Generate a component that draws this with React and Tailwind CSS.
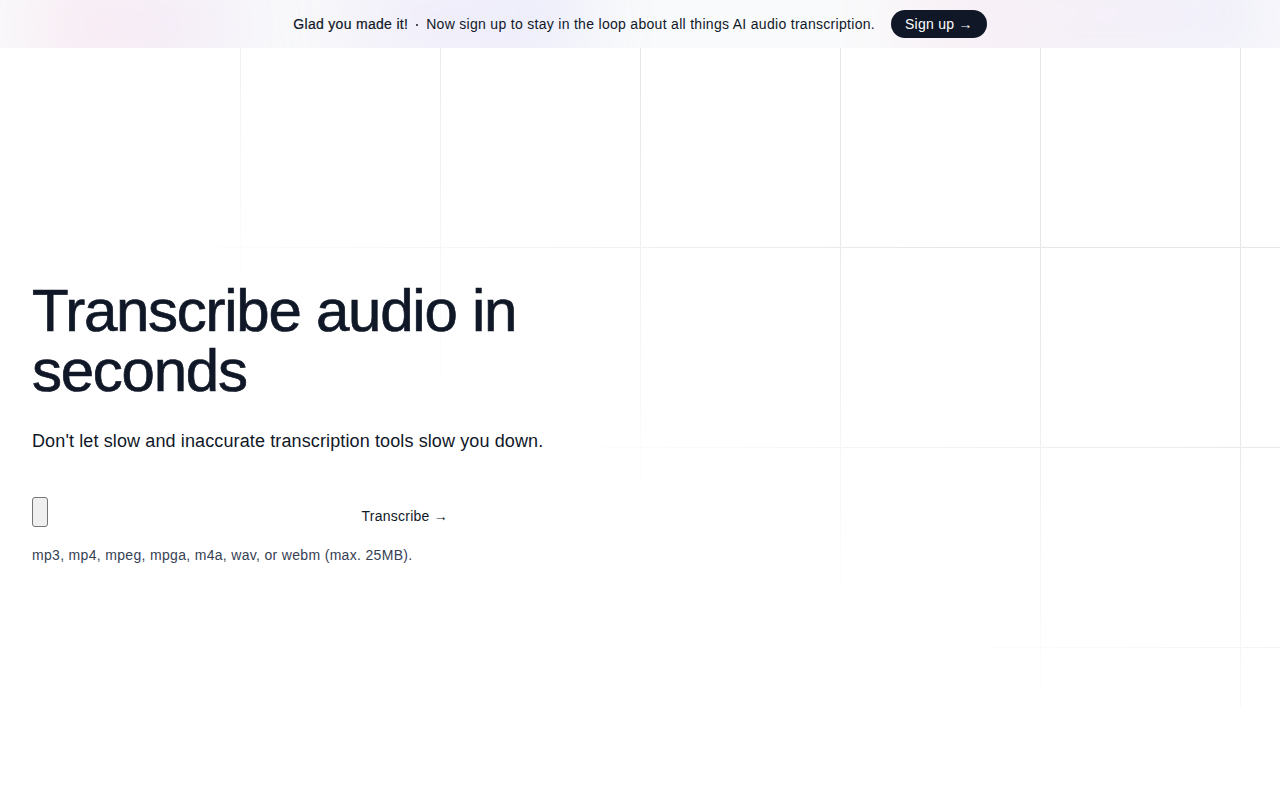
import React from "react";

const GridPattern = () => (
  <svg
    aria-hidden="true"
    className="absolute inset-x-0 top-0 -z-10 h-[660px] w-full stroke-gray-200 [mask-image:linear-gradient(to_top_right,transparent_40%,white_72%),linear-gradient(to_right,transparent_5%,white_18%)] [mask-composite:intersect]"
  >
    <defs>
      <pattern id="grid" width="200" height="200" x="50%" y="-1" patternUnits="userSpaceOnUse">
        <path d="M.5 200V.5H200" fill="none" />
      </pattern>
    </defs>
    <rect width="100%" height="100%" strokeWidth="0" fill="url(#grid)" />
  </svg>
);

const Banner = () => (
  <div className="relative isolate flex h-12 items-center justify-center gap-x-4 overflow-hidden bg-gray-50 px-6">
    <div className="absolute left-[30px] top-[-30px] -z-10 h-[110px] w-[220px] rounded-full bg-gradient-to-r from-[#ff80b5] to-[#c7a6f5] opacity-15 blur-2xl" />
    <div className="absolute left-[330px] top-[-40px] -z-10 h-[110px] w-[260px] rounded-full bg-gradient-to-r from-[#d9b6f0] to-[#9089fc] opacity-15 blur-2xl" />
    <div className="absolute left-[900px] top-[-40px] -z-10 h-[110px] w-[380px] rounded-full bg-gradient-to-r from-[#ff80b5] to-[#9089fc] opacity-10 blur-2xl" />
    <p className="text-sm leading-6 tracking-[0.3px] text-gray-900">
      <strong className="font-normal [-webkit-text-stroke:0.2px_#111827]">Glad you made it!</strong>
      <svg viewBox="0 0 2 2" className="mx-2 inline h-0.5 w-0.5 fill-current" aria-hidden="true">
        <circle cx="1" cy="1" r="1" />
      </svg>
      Now sign up to stay in the loop about all things AI audio transcription.
    </p>
    <a href="#" className="flex-none rounded-full bg-gray-900 px-3.5 py-0.5 text-sm leading-6 tracking-[0.25px] text-white">
      Sign up <span aria-hidden="true">&rarr;</span>
    </a>
  </div>
);

export default function App() {
  return (
    <div className="min-h-screen bg-white font-['Liberation_Sans',Arial,sans-serif]">
      <Banner />
      <main className="relative isolate px-8 pt-[233px] pb-24">
        <GridPattern />
        <h1 className="max-w-[600px] text-6xl font-normal leading-none tracking-[-0.021em] text-gray-900 [-webkit-text-stroke:0.7px_#111827]">
          Transcribe audio in seconds
        </h1>
        <p className="mt-6 text-lg leading-8 tracking-[0.12px] text-gray-900">
          Don't let slow and inaccurate transcription tools slow you down.
        </p>
        <form className="mt-10 flex w-[416px] items-start justify-between">
          <div className="h-[30px] w-4 rounded-[3px] border border-[#767676] bg-[#efefef]" />
          <button type="button" className="mt-[9px] text-sm leading-5 tracking-[0.25px] text-gray-900">
            Transcribe <span aria-hidden="true">&rarr;</span>
          </button>
        </form>
        <p className="mt-4 text-sm leading-6 tracking-[0.32px] text-gray-700">
          mp3, mp4, mpeg, mpga, m4a, wav, or webm (max. 25MB).
        </p>
      </main>
    </div>
  );
}
